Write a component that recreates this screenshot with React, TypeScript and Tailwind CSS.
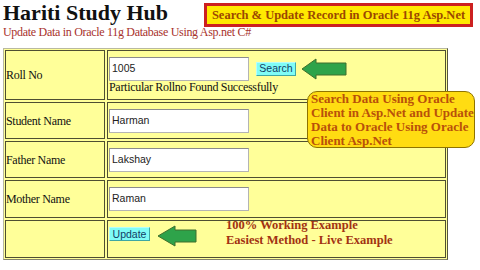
import React from 'react';

const serif = "font-['Liberation_Serif','Times_New_Roman',serif]";
const sans = "font-['Liberation_Sans',Arial,sans-serif]";

function Arrow({ width, head }: { width: number; head: number }) {
  return (
    <svg width={width} height={22} viewBox={`0 0 ${width} 22`} className="block shrink-0">
      <polygon
        points={`1,11 ${head},1 ${head},5 ${width - 1},5 ${width - 1},17 ${head},17 ${head},21`}
        fill="#2ea34a"
        stroke="#3f6f2c"
        strokeWidth="1"
        strokeLinejoin="round"
      />
    </svg>
  );
}

function TextBox({ value }: { value: string }) {
  return (
    <div
      className={`${sans} w-[140px] h-[24px] flex items-center pl-[2px] text-[10.5px] text-[#222] bg-white border border-[#b4b4b4] border-t-[#8c8c8c] border-l-[#9a9a9a]`}
    >
      {value}
    </div>
  );
}

function CyanButton({ label, w }: { label: string; w: string }) {
  return (
    <button
      className={`${sans} ${w} h-[14px] flex items-center justify-center text-[10.5px] leading-none text-[#123c66] bg-[#7ffcf6] border border-[#b6fdfa] border-r-[#3fa7a3] border-b-[#3fa7a3]`}
    >
      {label}
    </button>
  );
}

const cell = 'bg-[#ffff99] border border-[#4e4e32]';
const label = `${serif} ${cell} flex items-center pl-0 text-[12px] tracking-[-0.3px] text-[#111]`;

export default function App() {
  return (
    <div className="relative w-[480px] h-[270px] bg-white overflow-hidden">
      {/* Header */}
      <div className="flex items-start">
        <h1 className={`${serif} w-[201px] ml-[3px] pt-[2px] h-[24px] text-[22px] leading-[22px] font-bold text-[#111]`}>
          Hariti Study Hub
        </h1>
        <div
          className={`${serif} mt-[3px] w-[269px] h-[24px] flex items-center justify-center bg-[#ffe900] border-[3px] border-[#cc2020] text-[12.5px] font-bold text-[#9c4700]`}
        >
          Search &amp; Update Record in Oracle 11g Asp.Net
        </div>
      </div>
      <p className={`${serif} ml-[3px] -mt-[1px] h-[12px] text-[12px] leading-[12px] tracking-[-0.3px] text-[#a8322c]`}>
        Update Data in Oracle 11g Database Using Asp.net C#
      </p>

      {/* Form table */}
      <div className="ml-[3px] mt-[10px] w-[445px] p-[1px] bg-[#ffff99] border border-[#b9b9a0] border-r-[#55553c] border-b-[#85856a]">
        <div className="grid grid-cols-[100px_339px] grid-rows-[50px_37px_37px_38px_38px] gap-[2px]">
          <div className={label}>Roll No</div>
          <div className={`${cell} flex flex-col justify-center pl-[1px]`}>
            <div className="flex items-center">
              <TextBox value="1005" />
              <div className="ml-[7px]">
                <CyanButton label="Search" w="w-[40px]" />
              </div>
              <div className="ml-[5px]">
                <Arrow width={46} head={15} />
              </div>
            </div>
            <div className={`${serif} h-[13px] text-[12px] leading-[13px] tracking-[-0.3px] text-[#111] whitespace-nowrap`}>
              Particular Rollno Found Successfully
            </div>
          </div>

          <div className={label}>Student Name</div>
          <div className={`${cell} flex items-center pl-[1px]`}>
            <TextBox value="Harman" />
          </div>

          <div className={label}>Father Name</div>
          <div className={`${cell} flex items-center pl-[1px]`}>
            <TextBox value="Lakshay" />
          </div>

          <div className={label}>Mother Name</div>
          <div className={`${cell} flex items-center pl-[1px]`}>
            <TextBox value="Raman" />
          </div>

          <div className={cell}></div>
          <div className={`${cell} flex items-start pl-[1px]`}>
            <div className="mt-[6px]">
              <CyanButton label="Update" w="w-[41px]" />
            </div>
            <div className="mt-[4px] ml-[7px]">
              <Arrow width={40} head={18} />
            </div>
            <div className={`${serif} -mt-[3px] ml-[29px] text-[12.5px] leading-[14.5px] font-bold text-[#a23212] whitespace-nowrap`}>
              <div>100% Working Example</div>
              <div>Easiest Method - Live Example</div>
            </div>
          </div>
        </div>
      </div>

      {/* Callout */}
      <div
        className={`${serif} absolute left-[307px] top-[91px] w-[168px] h-[57px] pl-[3px] rounded-[10px] bg-[#ffdc12] border border-[#8f7300] text-[13px] leading-[14px] font-bold text-[#b9500a] whitespace-nowrap`}
      >
        <div>Search Data Using Oracle</div>
        <div>Client in Asp.Net and Update</div>
        <div>Data to Oracle Using Oracle</div>
        <div>Client Asp.Net</div>
      </div>
    </div>
  );
}
